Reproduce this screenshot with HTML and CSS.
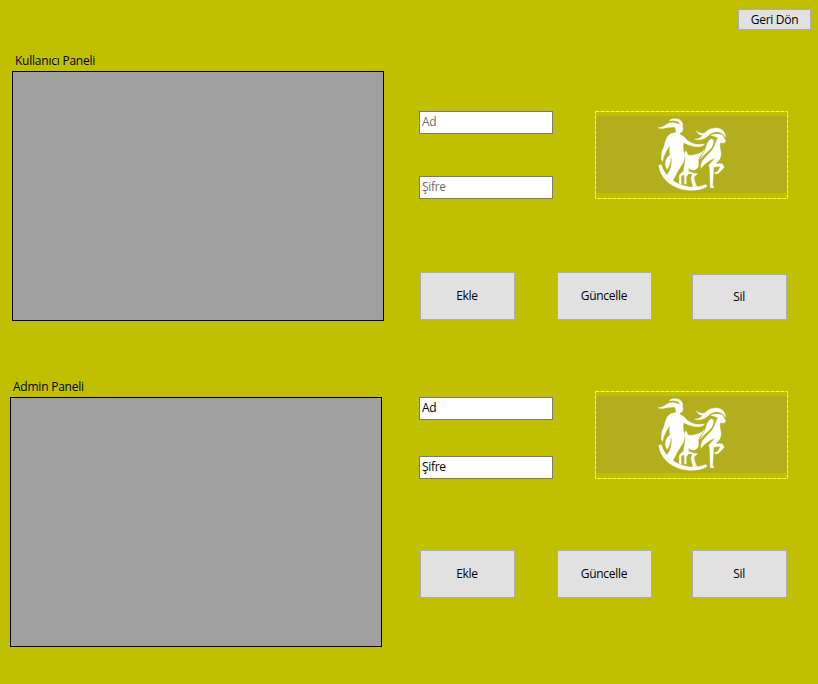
FILE: index.html
```html
<!DOCTYPE html>
<html lang="tr">
<head>
<meta charset="utf-8">
<title>Yönetim</title>
<link rel="stylesheet" href="styles.css">
</head>
<body>
<svg class="defs" width="0" height="0" aria-hidden="true">
  <symbol id="logo" viewBox="0 0 193 88">
    <rect class="tint" x="1" y="5" width="191" height="77"/>
    <rect class="dashes" x="0.5" y="0.5" width="192" height="87"/>
    <g class="figure" transform="translate(-5 -6) scale(.33333)">
      <path d="M204 68C220 69 226 59 236 55C248 50 260 54 268 60C262 66 246 67 237 67C225 68 220 74 204 68Z"/>
      <path d="M237 47C253 35 277 41 279 61L273 59C266 48 254 45 237 47Z"/>
      <path d="M256 60L272 55L277 61L279 71L277 80L270 83L271 89C281 92 285 98 291 105C304 116 321 121 344 117C335 130 307 126 281 113C276 128 284 141 284 157C282 177 263 196 256 213L246 230L231 210C242 196 246 179 245 163C239 151 237 138 240 123C230 133 222 149 217 170C210 155 216 139 222 125C227 107 230 91 243 86L258 82C261 75 252 70 256 60Z"/>
      <path d="M243 147C241 159 244 174 232 193C221 180 226 157 243 147Z"/>
      <path d="M206 181L214 179C222 206 245 229 272 239C299 249 327 248 347 238L352 244C337 256 303 260 276 253C237 243 211 217 206 181Z"/>
      <path d="M313 102C337 103 340 85 354 76C376 62 406 68 407 97C397 82 382 77 367 83C353 90 343 111 313 102Z"/>
      <path d="M319 78C328 85 335 86 347 83L340 91C330 92 324 87 319 78Z"/>
      <path d="M363 91C374 85 388 87 398 91L407 108L403 114L391 113C387 123 393 135 393 148C392 163 384 170 377 176L397 176L403 187L384 206L374 206L375 202L382 200L390 188L387 184L371 187L368 239L372 248L361 248L359 188L356 181C364 172 371 166 374 158C362 165 344 174 333 190C330 163 356 151 368 133C374 124 376 113 384 98L372 94Z"/>
      <path d="M365 102C355 106 350 116 348 127C345 140 336 149 331 162C340 148 358 140 367 124C372 115 373 103 365 102Z"/>
      <path d="M288 137C292 142 290 150 299 151C314 150 332 147 343 134C340 145 326 153 325 168C325 178 328 185 320 191C309 199 299 192 294 188L297 200L311 205L323 206L312 216L314 228L321 247L309 246L303 220L307 207L295 207L289 215L289 238L283 236L283 211L278 209L273 216L274 238L267 235L268 210L281 198L286 160C282 149 284 142 288 137Z"/>
    </g>
  </symbol>
</svg>

<main class="window">
  <header class="topbar"><button class="button back">Geri Dön</button></header>

  <section class="panel users">
    <div class="list">
      <h2>Kullanıcı Paneli</h2>
      <div class="datagrid"></div>
    </div>
    <div class="editor">
      <div class="entry">
        <div class="fields">
          <input type="text" placeholder="Ad" aria-label="Ad">
          <input type="text" placeholder="Şifre" aria-label="Şifre">
        </div>
        <svg class="logo"><use href="#logo"/></svg>
      </div>
      <div class="actions">
        <button class="button">Ekle</button>
        <button class="button">Güncelle</button>
        <button class="button short">Sil</button>
      </div>
    </div>
  </section>

  <section class="panel admins">
    <div class="list">
      <h2>Admin Paneli</h2>
      <div class="datagrid"></div>
    </div>
    <div class="editor">
      <div class="entry">
        <div class="fields">
          <input type="text" value="Ad" aria-label="Ad">
          <input type="text" value="Şifre" aria-label="Şifre">
        </div>
        <svg class="logo"><use href="#logo"/></svg>
      </div>
      <div class="actions">
        <button class="button">Ekle</button>
        <button class="button">Güncelle</button>
        <button class="button">Sil</button>
      </div>
    </div>
  </section>
</main>
</body>
</html>
```
FILE: styles.css
```css
* { box-sizing: border-box; }

body {
  margin: 0;
  background: #c0c000;
  color: #000;
  font: 12px/16px "Open Sans", "Noto Sans", sans-serif;
  letter-spacing: -0.23px;
}

.defs { position: absolute; }

.window { height: 684px; overflow: hidden; }

.topbar {
  display: flex;
  justify-content: flex-end;
  height: 53px;
  padding: 9px 7px 0 0;
}

.button {
  width: 95px;
  height: 48px;
  padding: 0 1px 0 0;
  border: 1px solid #adadad;
  background: #e1e1e1;
  color: #000;
  font: inherit;
  letter-spacing: -0.3px;
}

.button.back { width: 73px; height: 21px; padding: 0; line-height: 18px; }
.button.short { height: 46px; }

.panel { display: flex; }
.users { height: 326px; padding-left: 12px; gap: 35px; }
.admins { padding-left: 10px; gap: 37px; }

h2 {
  height: 18px;
  margin: 0 0 0 3px;
  font: inherit;
}

.datagrid {
  width: 372px;
  height: 250px;
  border: 1px solid #000;
  background: #a0a0a0;
}

.editor { width: 369px; }
.users .editor { padding-top: 58px; }
.admins .editor { padding-top: 12px; }

.entry {
  display: flex;
  justify-content: space-between;
  height: 88px;
}

.fields {
  display: flex;
  flex-direction: column;
  justify-content: space-between;
}

.admins .fields { padding-top: 6px; }

input {
  width: 134px;
  height: 23px;
  padding: 0 2px 2px;
  border: 1px solid #7a7a7a;
  background: #fff;
  color: #000;
  font: inherit;
  letter-spacing: -0.3px;
}

input::placeholder { color: #6d6d6d; opacity: 1; }

.logo { display: block; width: 193px; height: 88px; }
.tint { fill: #b2ae1e; }
.dashes { fill: none; stroke: #ffff20; stroke-dasharray: 4 1; }
.figure { fill: #fff; stroke: #fff; stroke-width: 1; }

.actions {
  display: flex;
  justify-content: space-between;
  align-items: flex-end;
  padding: 0 1px;
}

.users .actions { margin-top: 73px; }
.admins .actions { margin-top: 71px; }
.actions .button:nth-child(2) { margin-left: 2px; }
```
